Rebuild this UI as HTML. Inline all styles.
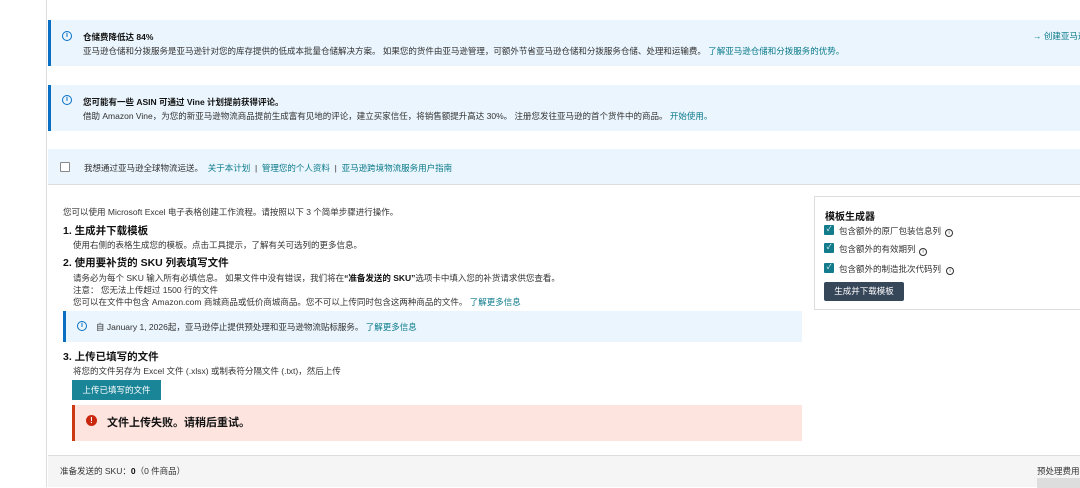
<!DOCTYPE html>
<html><head><meta charset="utf-8"><style>
*{margin:0;padding:0;box-sizing:border-box}
body{width:1080px;height:487px;overflow:hidden;background:#fff;font-family:"Liberation Sans","Noto Sans CJK SC",sans-serif;font-size:8.5px;color:#333;position:relative}
.abs{position:absolute}
.lb{position:absolute;left:0;top:0;width:47px;height:487px;background:#fff;border-right:1px solid #ddd}
.ban{position:absolute;left:48px;right:0;background:#eaf5fd}
.bar{position:absolute;left:0;top:0;bottom:0;width:3px;background:#0a6fc2}
.info{position:absolute;width:10px;height:10px;border:1.2px solid #0a6fc2;border-radius:50%;color:#0a6fc2;font-size:7px;line-height:8px;text-align:center;font-weight:bold}
a{color:#0b7a8a;text-decoration:none}
b{color:#111}
h3{font-size:10.5px;color:#111;position:absolute;left:63px}
.cb{position:absolute;left:824px;width:10px;height:10px;background:#127c8c;border-radius:1px;color:#fff;font-size:7px;line-height:10px;text-align:center}
.ii{position:absolute;width:8px;height:8px;border:1px solid #333;border-radius:50%;font-size:5px;line-height:6px;text-align:center}
</style></head><body>
<div class="lb"></div>

<div class="ban" style="top:20px;height:46px"><div class="bar"></div>
<div class="info" style="left:14px;top:11px">i</div>
<div class="abs" style="left:35px;top:11px"><b>仓储费降低达 84%</b></div>
<div class="abs" style="left:35px;top:25px;white-space:nowrap">亚马逊仓储和分拨服务是亚马逊针对您的库存提供的低成本批量仓储解决方案。 如果您的货件由亚马逊管理，可额外节省亚马逊仓储和分拨服务仓储、处理和运输费。 <a>了解亚马逊仓储和分拨服务的优势。</a></div>
<div class="abs" style="left:985px;top:10px;white-space:nowrap"><a>→ 创建亚马逊</a></div>
</div>

<div class="ban" style="top:85px;height:46px"><div class="bar"></div>
<div class="info" style="left:14px;top:10px">i</div>
<div class="abs" style="left:35px;top:11px"><b>您可能有一些 ASIN 可通过 Vine 计划提前获得评论。</b></div>
<div class="abs" style="left:35px;top:25px;white-space:nowrap">借助 Amazon Vine，为您的新亚马逊物流商品提前生成富有见地的评论，建立买家信任，将销售额提升高达 30%。 注册您发往亚马逊的首个货件中的商品。 <a>开始使用。</a></div>
</div>

<div class="ban" style="top:149px;height:36px;border-bottom:1px solid #ddd">
<div class="abs" style="left:12px;top:13px;width:10px;height:10px;border:1px solid #888;background:#fff;border-radius:1px"></div>
<div class="abs" style="left:36px;top:13px;white-space:nowrap">我想通过亚马逊全球物流运送。 &nbsp;<a>关于本计划</a> &nbsp;| &nbsp;<a>管理您的个人资料</a> &nbsp;| &nbsp;<a>亚马逊跨境物流服务用户指南</a></div>
</div>

<div class="abs" style="left:63px;top:206px">您可以使用 Microsoft Excel 电子表格创建工作流程。请按照以下 3 个简单步骤进行操作。</div>
<h3 style="top:223px">1. 生成并下载模板</h3>
<div class="abs" style="left:73px;top:239px">使用右侧的表格生成您的模板。点击工具提示，了解有关可选列的更多信息。</div>
<h3 style="top:255px">2. 使用要补货的 SKU 列表填写文件</h3>
<div class="abs" style="left:73px;top:272px;white-space:nowrap">请务必为每个 SKU 输入所有必填信息。 如果文件中没有错误，我们将在<b>“准备发送的 SKU”</b>选项卡中填入您的补货请求供您查看。</div>
<div class="abs" style="left:73px;top:284px">注意： 您无法上传超过 1500 行的文件</div>
<div class="abs" style="left:73px;top:296px;white-space:nowrap">您可以在文件中包含 Amazon.com 商城商品或低价商城商品。您不可以上传同时包含这两种商品的文件。 <a>了解更多信息</a></div>

<div class="abs" style="left:63px;top:311px;width:739px;height:31px;background:#eaf5fd"><div class="bar"></div>
<div class="info" style="left:14px;top:10px">i</div>
<div class="abs" style="left:33px;top:10px;white-space:nowrap">自 January 1, 2026起，亚马逊停止提供预处理和亚马逊物流贴标服务。 <a>了解更多信息</a></div></div>

<h3 style="top:349px">3. 上传已填写的文件</h3>
<div class="abs" style="left:73px;top:365px">将您的文件另存为 Excel 文件 (.xlsx) 或制表符分隔文件 (.txt)，然后上传</div>
<div class="abs" style="left:72px;top:380px;width:89px;height:20px;background:#1b8598;color:#fff;text-align:center;line-height:20px">上传已填写的文件</div>
<div class="abs" style="left:72px;top:405px;width:730px;height:36px;background:#fde4df;border-left:3px solid #cc3a14">
<div class="abs" style="left:11px;top:10px;width:11px;height:11px;border-radius:50%;background:#c9280e;color:#fff;font-size:8px;line-height:11px;text-align:center;font-weight:bold">!</div>
<div class="abs" style="left:32px;top:9px;font-size:11px;font-weight:bold;color:#111">文件上传失败。请稍后重试。</div></div>

<div class="abs" style="left:48px;top:455px;width:1032px;height:32px;background:#f5f5f5;border-top:1px solid #ddd">
<div class="abs" style="left:12px;top:9px">准备发送的 SKU：<b>0</b>（0 件商品）</div>
<div class="abs" style="left:989px;top:9px;white-space:nowrap">预处理费用</div>
<div class="abs" style="left:989px;top:22px;width:50px;height:10px;background:#ddd"></div></div>

<div class="abs" style="left:814px;top:196px;width:270px;height:114px;border:1px solid #ddd;background:#fff">
<div class="abs" style="left:10px;top:11px;font-size:10px;font-weight:bold;color:#111">模板生成器</div></div>
<div class="cb" style="top:225px">✓</div><div class="abs" style="left:839px;top:225px">包含额外的原厂包装信息列</div><div class="ii" style="left:945px;top:229px">i</div>
<div class="cb" style="top:243px">✓</div><div class="abs" style="left:839px;top:243px">包含额外的有效期列</div><div class="ii" style="left:919px;top:248px">i</div>
<div class="cb" style="top:263px">✓</div><div class="abs" style="left:839px;top:263px">包含额外的制造批次代码列</div><div class="ii" style="left:946px;top:267px">i</div>
<div class="abs" style="left:824px;top:282px;width:80px;height:19px;background:#37475a;color:#fff;text-align:center;line-height:19px;border-radius:2px">生成并下载模板</div>
</body></html>
